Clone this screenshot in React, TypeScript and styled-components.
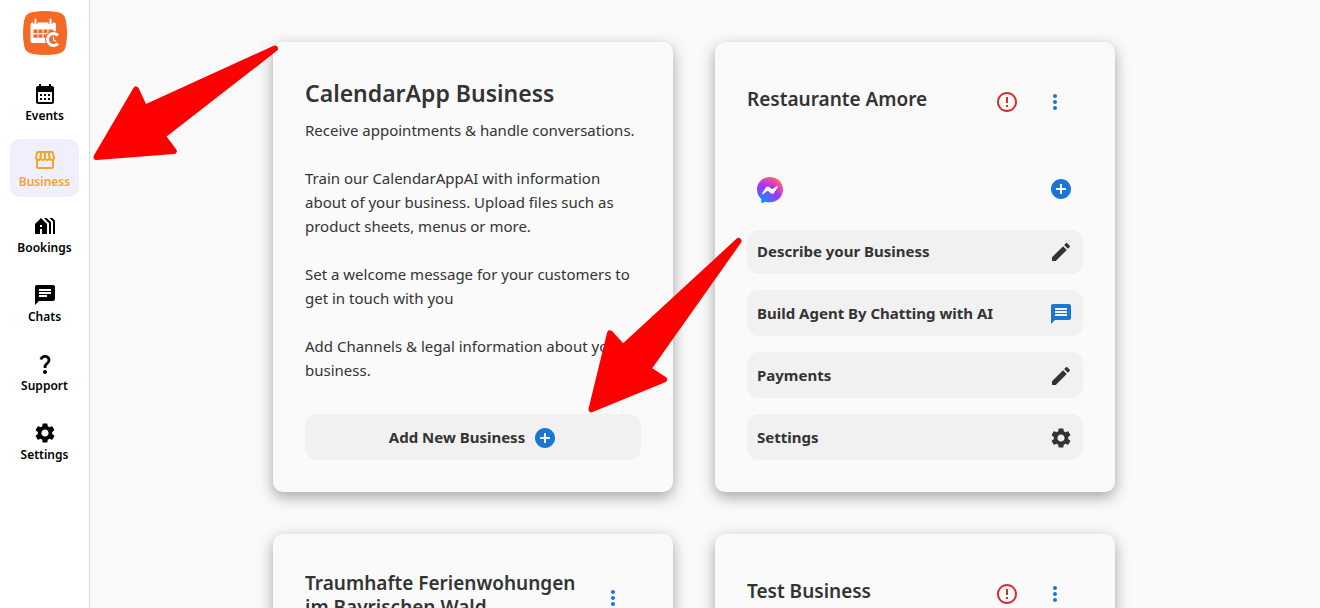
import React from 'react';
import styled, { createGlobalStyle, css } from 'styled-components';
import {
  MdAddCircle,
  MdCalendarMonth,
  MdChat,
  MdEdit,
  MdErrorOutline,
  MdHolidayVillage,
  MdMessage,
  MdMoreVert,
  MdQuestionMark,
  MdSettings,
  MdStorefront,
} from 'react-icons/md';

const GlobalStyle = createGlobalStyle`
  * { box-sizing: border-box; }
  body {
    margin: 0;
    background: #fafafa;
    color: #333;
    font-family: "Noto Sans", "Open Sans", sans-serif;
    font-size: 15px;
    line-height: 24px;
  }
  h1, h2, p { margin: 0; }
  svg { display: block; flex-shrink: 0; }
`;

const Page = styled.div`
  position: relative;
  display: flex;
  height: 100vh;
  overflow: hidden;
`;

const Sidebar = styled.aside`
  display: flex;
  flex-direction: column;
  align-items: center;
  flex: 0 0 90px;
  padding: 11px 10px;
  background: #fff;
  border-right: 1px solid #dcdcdc;
`;

const Nav = styled.nav`
  display: flex;
  flex-direction: column;
  align-self: stretch;
  gap: 11px;
  margin-top: 18px;
`;

const NavGroup = styled.div<{ $gap: number }>`
  display: flex;
  flex-direction: column;
  gap: ${(p) => p.$gap}px;
`;

const NavLink = styled.a<{ $active?: boolean }>`
  display: flex;
  flex-direction: column;
  align-items: center;
  height: 58px;
  padding-top: 9px;
  border-radius: 10px;
  color: #000;
  font-size: 12px;
  font-weight: 600;
  line-height: 20px;
  text-decoration: none;
  ${(p) =>
    p.$active &&
    css`
      background: #f0effd;
      color: #f5a623;
    `}
`;

const Main = styled.main`
  display: flex;
  flex: 1;
  flex-wrap: wrap;
  justify-content: center;
  align-content: flex-start;
  gap: 42px;
  min-width: 0;
  padding: 42px 22px 42px 0;
`;

const Card = styled.section`
  display: flex;
  flex-direction: column;
  width: 400px;
  min-height: 450px;
  padding: 32px;
  border-radius: 10px;
  background: #fafafa;
  box-shadow: 0 5px 15px rgba(0, 0, 0, 0.35);
`;

const Title = styled.h1`
  padding: 3px 0 1px;
  font-size: 23px;
  font-weight: 600;
  line-height: 32px;
`;

const Intro = styled.div`
  display: flex;
  flex-direction: column;
  gap: 24px;
  margin-top: 8px;
`;

const CardHeader = styled.header`
  display: flex;
  align-items: center;
  min-height: 56px;
  padding-right: 16px;
`;

const CardTitle = styled.h2`
  flex: 1;
  padding: 5px 0 11px;
  font-size: 19px;
  font-weight: 600;
  line-height: 24px;
`;

const IconButton = styled.button<{ $color: string }>`
  display: flex;
  padding: 0;
  border: 0;
  background: none;
  color: ${(p) => p.$color};
  cursor: pointer;
`;

const HeaderActions = styled.div`
  display: flex;
  gap: 24px;
  padding-left: 8px;
`;

const Channels = styled.div`
  display: flex;
  align-items: flex-start;
  justify-content: space-between;
  margin-top: auto;
  margin-bottom: 27px;
  padding: 0 10px;
`;

const Actions = styled.div`
  display: flex;
  flex-direction: column;
  gap: 16px;
`;

const ActionButton = styled.button<{ $centered?: boolean; $compact?: boolean }>`
  display: flex;
  align-items: center;
  justify-content: ${(p) => (p.$centered ? 'center' : 'space-between')};
  gap: 8px;
  height: ${(p) => (p.$compact ? 44 : 46)}px;
  margin-top: ${(p) => (p.$centered ? 'auto' : 0)};
  padding: ${(p) => (p.$compact ? 0 : 2)}px 10px 0;
  border: 0;
  border-radius: 12px;
  background: #f1f1f1;
  color: #333;
  font: inherit;
  font-weight: 700;
  cursor: pointer;
`;

const ActionLabel = styled.span`
  padding-bottom: 2px;
`;

const Annotations = styled.svg`
  position: absolute;
  top: 0;
  left: 0;
  fill: #f00;
  stroke: #f00;
  stroke-width: 6px;
  stroke-linejoin: round;
  pointer-events: none;
`;

const BLUE = '#1976d2';
const RED = '#d32f2f';

function Logo() {
  return (
    <svg width="44" height="44" viewBox="0 0 44 44" role="img" aria-label="CalendarApp">
      <path d="M10 1Q22-1 34 1Q42 2 43 10Q45 22 43 34Q42 42 34 43Q22 45 10 43Q2 42 1 34Q-1 22 1 10Q2 2 10 1Z" fill="#f26a25" />
      <rect x="7.500" y="11.500" width="25.500" height="20.500" rx="2" fill="#fff" />
      <path d="M10.500 18.500h4v3.500h-4zM15.500 18.500h4v3.500h-4zM20.500 18.500h4v3.500h-4zM25.500 18.500h4.500v3.500h-4.500zM10.500 23.200h4v3.500h-4zM15.500 23.200h4v3.500h-4zM20.500 23.200h4v3.500h-4z" fill="#f26a25" />
      <path d="M12.500 8.500v4.500M27.500 8.500v4.500" stroke="#f26a25" strokeWidth="4" />
      <path d="M12.500 8.500v4.500M27.500 8.500v4.500" stroke="#fff" strokeWidth="2" strokeLinecap="round" />
      <circle cx="30.500" cy="28.500" r="8.500" fill="#f26a25" />
      <path d="M35 24.500a6 6 0 1 0 0 8" fill="none" stroke="#fff" strokeWidth="3" />
      <path d="M30.500 25.500v3.500l2.500 1.500" fill="none" stroke="#fff" strokeWidth="1.200" />
    </svg>
  );
}

function Messenger() {
  return (
    <svg width="26" height="26" viewBox="0 0 26 26" role="img" aria-label="Messenger">
      <defs>
        <radialGradient id="messenger" cx="0.190" cy="0.990" r="1.090">
          <stop offset="0" stopColor="#09f" />
          <stop offset="0.600" stopColor="#a033ff" />
          <stop offset="0.930" stopColor="#ff5280" />
          <stop offset="1" stopColor="#ff7061" />
        </radialGradient>
      </defs>
      <path d="M13 0C5.700 0 0 5.400 0 12.600c0 3.800 1.600 7.100 4.200 9.300v3.200c0 .7.700 1.100 1.300.8l2.700-1.200c1.500.4 3.100.6 4.800.6 7.300 0 13-5.400 13-12.700S20.300 0 13 0Z" fill="url(#messenger)" />
      <path d="m5.200 16.300 3.800-6c.7-1 2-1.200 2.900-.5l3 2.300c.3.200.6.200.9 0l4.100-3.100c.6-.4 1.300.3.900.9l-3.800 6c-.7 1-2 1.200-2.900.5l-3-2.300c-.3-.2-.6-.2-.9 0l-4.100 3.100c-.6.400-1.300-.3-.9-.9Z" fill="#fff" />
    </svg>
  );
}

function BusinessHeader({ name, warning }: { name: string; warning?: boolean }) {
  return (
    <CardHeader>
      <CardTitle>{name}</CardTitle>
      <HeaderActions>
        {warning && (
          <IconButton $color={RED} aria-label="Show warning">
            <MdErrorOutline size={24} />
          </IconButton>
        )}
        <IconButton $color="#1a73e8" aria-label="More options">
          <MdMoreVert size={24} />
        </IconButton>
      </HeaderActions>
    </CardHeader>
  );
}

function BusinessCard({ name, warning }: { name: string; warning?: boolean }) {
  return (
    <Card>
      <BusinessHeader name={name} warning={warning} />
      <Channels>
        <Messenger />
        <IconButton $color={BLUE} aria-label="Add channel">
          <MdAddCircle size={24} />
        </IconButton>
      </Channels>
      <Actions>
        <ActionButton $compact>
          <ActionLabel>Describe your Business</ActionLabel>
          <MdEdit size={24} />
        </ActionButton>
        <ActionButton>
          <ActionLabel>Build Agent By Chatting with AI</ActionLabel>
          <MdMessage size={24} color={BLUE} />
        </ActionButton>
        <ActionButton>
          <ActionLabel>Payments</ActionLabel>
          <MdEdit size={24} />
        </ActionButton>
        <ActionButton>
          <ActionLabel>Settings</ActionLabel>
          <MdSettings size={24} />
        </ActionButton>
      </Actions>
    </Card>
  );
}

export default function App() {
  return (
    <Page>
      <GlobalStyle />
      <Sidebar>
        <Logo />
        <Nav>
          <NavGroup $gap={8}>
            <NavLink href="#events"><MdCalendarMonth size={24} />Events</NavLink>
            <NavLink href="#business" $active aria-current="page"><MdStorefront size={24} />Business</NavLink>
            <NavLink href="#bookings"><MdHolidayVillage size={24} />Bookings</NavLink>
          </NavGroup>
          <NavGroup $gap={11}>
            <NavLink href="#chats"><MdChat size={24} />Chats</NavLink>
            <NavLink href="#support"><MdQuestionMark size={24} />Support</NavLink>
            <NavLink href="#settings"><MdSettings size={24} />Settings</NavLink>
          </NavGroup>
        </Nav>
      </Sidebar>
      <Main>
        <Card>
          <Title>CalendarApp Business</Title>
          <Intro>
            <p>Receive appointments &amp; handle conversations.</p>
            <p>Train our CalendarAppAI with information about of your business. Upload files such as product sheets, menus or more.</p>
            <p>Set a welcome message for your customers to get in touch with you</p>
            <p>Add Channels &amp; legal information about your business.</p>
          </Intro>
          <ActionButton $centered>
            <ActionLabel>Add New Business</ActionLabel>
            <MdAddCircle size={24} color={BLUE} />
          </ActionButton>
        </Card>
        <BusinessCard name="Restaurante Amore" warning />
        <BusinessCard name="Traumhafte Ferienwohungen im Bayrischen Wald" />
        <BusinessCard name="Test Business" warning />
      </Main>
      <Annotations width="760" height="430" viewBox="0 0 760 430" aria-hidden="true">
        <path d="M96.500 157 136 89.500 144.500 108 275 48.500 162.500 136 173.700 151Z" />
        <path d="M591.500 409.300 610 333.300 623 347.500 738.500 241 648 369 664 379.500Z" />
      </Annotations>
    </Page>
  );
}
